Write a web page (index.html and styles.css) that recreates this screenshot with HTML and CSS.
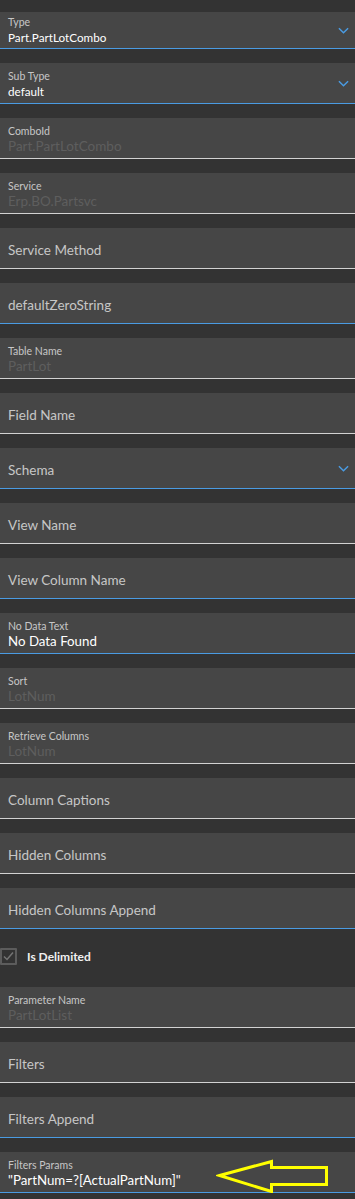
FILE: index.html
```html
<!DOCTYPE html>
<html lang="en">
<head>
    <meta charset="UTF-8">
    <meta name="viewport" content="width=device-width, initial-scale=1.0">
    <title>Combo Properties</title>
    <link rel="stylesheet" href="styles.css">
</head>
<body>
    <div class="panel">
        <div class="field first focus select">
            <span class="label">Type</span>
            <span class="value">Part.PartLotCombo</span>
            <svg class="chevron" viewBox="0 0 12 7"><path d="M1 1 L6 6 L11 1"/></svg>
        </div>
        <div class="field focus select">
            <span class="label">Sub Type</span>
            <span class="value">default</span>
            <svg class="chevron" viewBox="0 0 12 7"><path d="M1 1 L6 6 L11 1"/></svg>
        </div>
        <div class="field">
            <span class="label">ComboId</span>
            <span class="value disabled">Part.PartLotCombo</span>
        </div>
        <div class="field">
            <span class="label">Service</span>
            <span class="value disabled">Erp.BO.Partsvc</span>
        </div>
        <div class="field">
            <span class="big">Service Method</span>
        </div>
        <div class="field focus">
            <span class="big">defaultZeroString</span>
        </div>
        <div class="field">
            <span class="label">Table Name</span>
            <span class="value disabled">PartLot</span>
        </div>
        <div class="field">
            <span class="big">Field Name</span>
        </div>
        <div class="field focus select">
            <span class="big">Schema</span>
            <svg class="chevron" viewBox="0 0 12 7"><path d="M1 1 L6 6 L11 1"/></svg>
        </div>
        <div class="field">
            <span class="big">View Name</span>
        </div>
        <div class="field focus">
            <span class="big">View Column Name</span>
        </div>
        <div class="field focus">
            <span class="label">No Data Text</span>
            <span class="value">No Data Found</span>
        </div>
        <div class="field">
            <span class="label">Sort</span>
            <span class="value disabled">LotNum</span>
        </div>
        <div class="field">
            <span class="label">Retrieve Columns</span>
            <span class="value disabled">LotNum</span>
        </div>
        <div class="field">
            <span class="big">Column Captions</span>
        </div>
        <div class="field">
            <span class="big">Hidden Columns</span>
        </div>
        <div class="field focus">
            <span class="big">Hidden Columns Append</span>
        </div>
        <label class="check-row">
            <span class="checkbox">
                <svg viewBox="0 0 13 13"><path d="M2 6.5 L5 9.5 L11 2.5"/></svg>
            </span>
            <span class="check-label">Is Delimited</span>
        </label>
        <div class="field after-check">
            <span class="label">Parameter Name</span>
            <span class="value disabled">PartLotList</span>
        </div>
        <div class="field">
            <span class="big">Filters</span>
        </div>
        <div class="field focus">
            <span class="big">Filters Append</span>
        </div>
        <div class="field focus">
            <span class="label">Filters Params</span>
            <span class="value">"PartNum=?[ActualPartNum]"</span>
            <svg class="arrow" viewBox="0 0 114 38">
                <polygon points="3.5,16.5 55.5,2.5 55.5,8.5 110.5,8.5 110.5,25.5 55.5,25.5 55.5,32.5"/>
            </svg>
        </div>
    </div>
</body>
</html>
```

FILE: styles.css
```css
:root {
    --bg: #333333;
    --box: #464646;
    --label: #c6c6c6;
    --muted: #5e5e5e;
    --blue: #4a9be2;
    --line: #d2d2d2;
}
body {
    margin: 0;
    background-color: var(--bg);
    font-family: Lato, "Liberation Sans", sans-serif;
    color: #fff;
}
.panel { width: 355px; display: flex; flex-direction: column; }
.field {
    position: relative;
    margin-top: 14px;
    height: 37px;
    padding: 3px 8px 0;
    box-sizing: content-box;
    background-color: var(--box);
    border-bottom: 1px solid var(--line);
    display: flex;
    flex-direction: column;
    justify-content: center;
}
.field.first { margin-top: 12px; height: 34px; justify-content: flex-end; padding: 0 8px 2px; }
.field.focus { border-bottom-color: var(--blue); }
.field.after-check { margin-top: 0; }
.label { font-size: 10.5px; line-height: 14px; color: var(--label); }
.value { font-size: 13.3px; line-height: 17px; color: #fff; }
.select .value { font-size: 11.7px; }
.value.disabled { color: var(--muted); font-size: 13.5px; }
.big { font-size: 13.5px; color: var(--label); }
.chevron {
    position: absolute;
    right: 6px;
    top: 50%;
    width: 11px;
    height: 7px;
    margin-top: -3px;
    fill: none;
    stroke: var(--blue);
    stroke-width: 1.6;
}
.check-row {
    height: 58px;
    display: flex;
    align-items: center;
    gap: 10px;
    padding-bottom: 3px;
    box-sizing: border-box;
}
.checkbox {
    width: 13px;
    height: 13px;
    border: 2px solid #5c5c5c;
    border-radius: 1px;
    display: flex;
}
.checkbox svg { width: 13px; height: 13px; fill: none; stroke: #747474; stroke-width: 1.5; }
.check-label { font-size: 12px; font-weight: 700; color: #f0f0f0; }
.arrow {
    position: absolute;
    left: 216px;
    top: 7px;
    width: 114px;
    height: 38px;
    fill: none;
    stroke: #ffff00;
    stroke-width: 3;
}
```
